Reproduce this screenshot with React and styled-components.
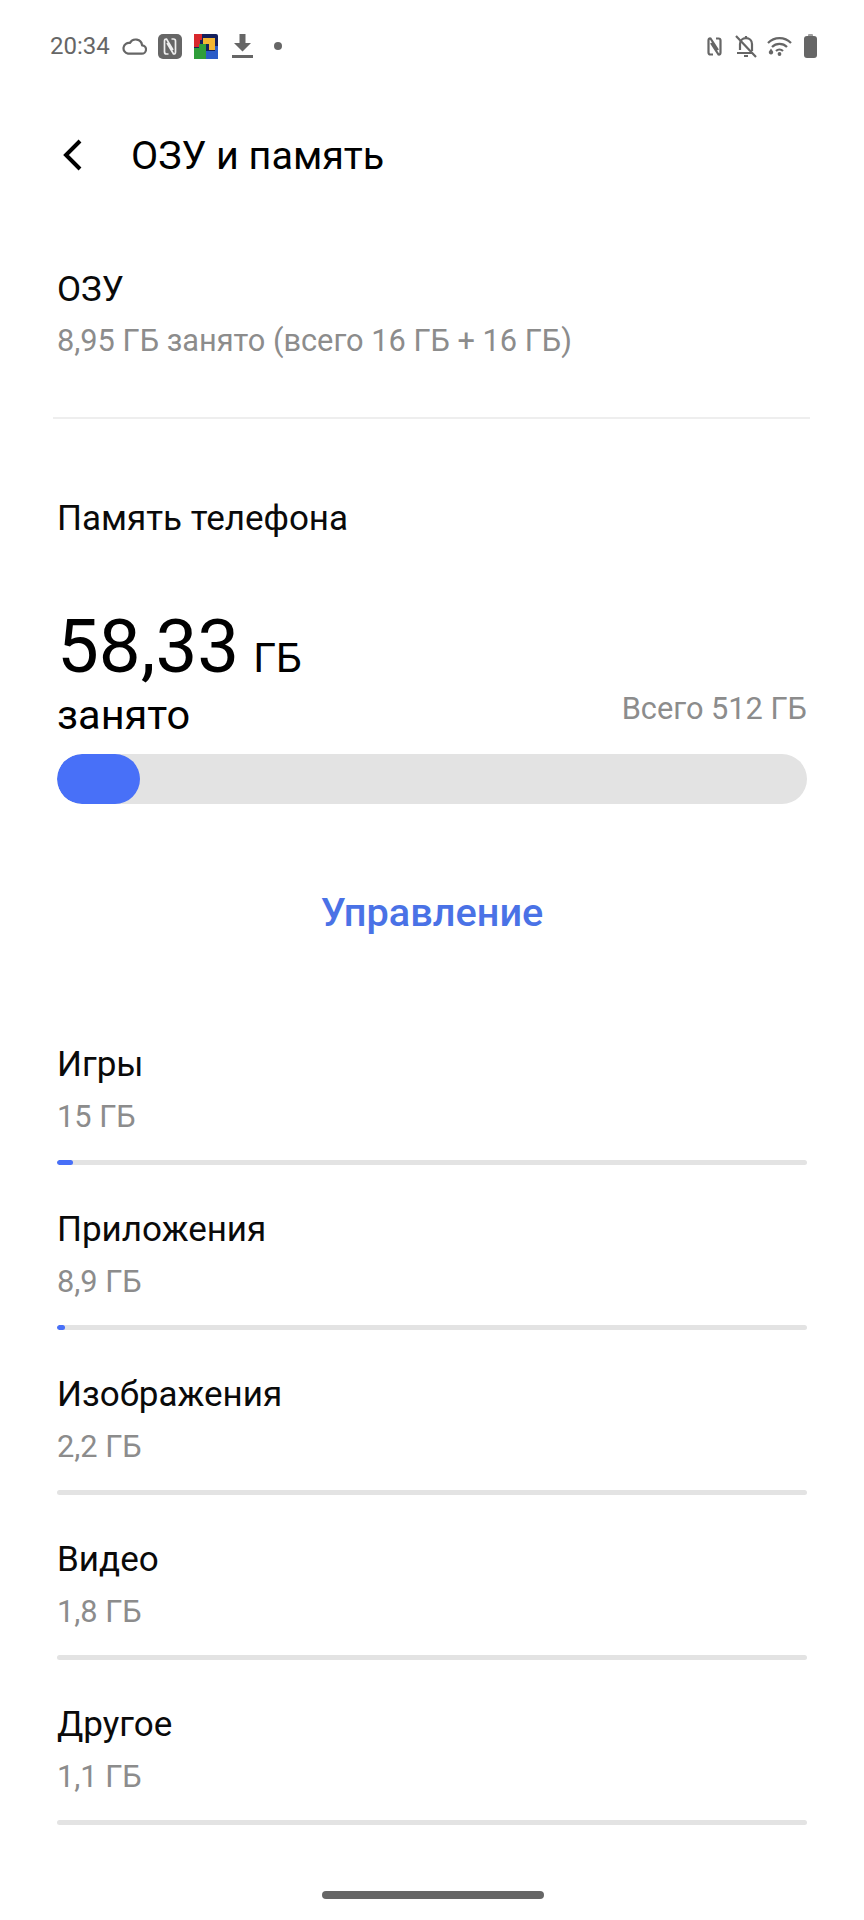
import React from "react"
import styled, { createGlobalStyle } from "styled-components"

const GlobalStyle = createGlobalStyle`
  html, body {
    margin: 0;
    padding: 0;
    background: #fff;
  }
`

const Page = styled.div`
  position: relative;
  width: 864px;
  height: 1920px;
  overflow: hidden;
  background: #fff;
  font-family: Roboto, "Noto Sans", sans-serif;
  color: #000;
  display: flex;
  flex-direction: column;
`

const StatusBar = styled.div`
  height: 92px;
  padding: 0 47px 0 50px;
  box-sizing: border-box;
  display: flex;
  align-items: center;
  justify-content: space-between;
  color: #666;
`

const StatusGroup = styled.div`
  display: flex;
  align-items: center;
`

const Time = styled.span`
  font-size: 24px;
  color: #666;
`

const Header = styled.div`
  height: 126px;
  display: flex;
  align-items: center;
  padding-left: 62px;
  box-sizing: border-box;
`

const Title = styled.h1`
  margin: 0 0 0 49px;
  font-size: 39.5px;
  font-weight: 400;
`

const Section = styled.div`
  padding: 0 57px;
`

const RamBlock = styled(Section)`
  padding-top: 52px;
  height: 199px;
  box-sizing: border-box;
`

const Label = styled.div`
  font-size: 35px;
  line-height: 40px;
  color: #0a0a0a;
`

const Sub = styled.div`
  font-size: 30.75px;
  line-height: 36px;
  color: #8c8c8c;
  margin-top: ${(p) => p.$top}px;
`

const Divider = styled.div`
  height: 2px;
  margin: 0 54px 0 53px;
  background: #eeeeee;
`

const StorageTitle = styled(Label)`
  margin-top: 80px;
`

const UsedRow = styled.div`
  margin-top: 63px;
  height: 88px;
  display: flex;
  align-items: baseline;
`

const UsedValue = styled.span`
  font-size: 74.5px;
  line-height: 90px;
`

const UsedUnit = styled.span`
  font-size: 41px;
  margin-left: 14px;
`

const UsedFoot = styled.div`
  display: flex;
  align-items: flex-start;
  justify-content: space-between;
`

const UsedLabel = styled.span`
  font-size: 41.5px;
  line-height: 50px;
`

const Total = styled.span`
  font-size: 30.75px;
  line-height: 36px;
  color: #8c8c8c;
  margin-top: 1px;
`

const Track = styled.div`
  height: ${(p) => p.$height}px;
  border-radius: ${(p) => p.$height / 2}px;
  background: #e3e3e3;
  overflow: hidden;
  margin-top: ${(p) => p.$top}px;
`

const Fill = styled.div`
  height: 100%;
  border-radius: inherit;
  background: #4870f8;
`

const Manage = styled.div`
  margin-top: 85px;
  text-align: center;
  font-size: 39.7px;
  line-height: 48px;
  font-weight: 500;
  color: #4a72e6;
`

const List = styled(Section)`
  margin-top: 108px;
  display: flex;
  flex-direction: column;
  gap: 37px;
`

const Row = styled.div`
  height: 128px;
`

const HomeBar = styled.div`
  position: absolute;
  left: 322px;
  top: 1891px;
  width: 222px;
  height: 8px;
  border-radius: 4px;
  background: #666;
`

const IconSvg = styled.svg`
  display: block;
  flex: none;
  margin-left: ${(p) => p.$left || 0}px;
`

const CloudIcon = () => (
  <IconSvg $left={12} width="25" height="18" viewBox="0 0 25 18" fill="none" stroke="#666" strokeWidth="2.2">
    <path d="M6 16.700h13.500a4.200 4.200 0 0 0 .6-8.400 6.500 6.500 0 0 0-12.200-2.300A5.400 5.400 0 0 0 6 16.700z" strokeLinejoin="round" />
  </IconSvg>
)

const NfcBadge = () => (
  <IconSvg $left={11} width="24" height="25" viewBox="0 0 24 25">
    <rect width="24" height="25" rx="5" fill="#666" />
    <path d="M10.500 20H8.500Q6.500 20 6.500 18V7Q6.500 4.800 8.500 5L15 16M13.500 5H15.500Q17.500 5 17.500 7V18Q17.500 20.200 15.500 20L9 9" fill="none" stroke="#eee" strokeWidth="1.700" />
  </IconSvg>
)

const GameIcon = () => (
  <IconSvg $left={12} width="24" height="25" viewBox="0 0 24 25">
    <rect width="24" height="25" rx="2" fill="#14205c" />
    <rect x="0" y="0" width="8" height="6" fill="#d8282c" />
    <rect x="0" y="6" width="6" height="7" fill="#d8282c" />
    <rect x="9" y="4" width="12" height="6" fill="#f2b632" />
    <rect x="15" y="9" width="6" height="7" fill="#f2b632" />
    <rect x="0" y="14" width="12" height="11" fill="#2f9e3a" />
    <rect x="5" y="10" width="7" height="5" fill="#2f9e3a" />
    <rect x="12" y="17" width="12" height="8" fill="#2a5cc8" />
    <rect x="21" y="12" width="3" height="6" fill="#2a5cc8" />
  </IconSvg>
)

const DownloadIcon = () => (
  <IconSvg $left={14} width="21" height="24" viewBox="0 0 21 24" fill="#666">
    <path d="M7.500 0h6v9h5.500l-8.500 8.500L2 9h5.500z" />
    <rect x="0" y="21" width="21" height="3" />
  </IconSvg>
)

const Dot = styled.span`
  width: 8px;
  height: 8px;
  border-radius: 50%;
  background: #666;
  margin-left: 21px;
`

const NfcIcon = () => (
  <IconSvg width="15" height="19" viewBox="0 0 15 19" fill="none" stroke="#666" strokeWidth="2.200">
    <path d="M6 17.500H3.500Q1.500 17.500 1.500 15.500V3.500Q1.500 1.200 3.500 1.500L11 13M9 1.500H11.500Q13.500 1.500 13.500 3.500V15.500Q13.500 17.800 11.500 17.500L4 6" />
  </IconSvg>
)

const BellOffIcon = () => (
  <IconSvg $left={13} width="22" height="23" viewBox="0 0 22 23" fill="none" stroke="#666" strokeWidth="2.200">
    <path d="M5 15V9c0-3.500 2.500-5.800 6-5.800S17 5.500 17 9v7M2 18h15" strokeLinejoin="round" />
    <path d="M11 3V1M9 21h4M1 1l20 21" />
  </IconSvg>
)

const WifiIcon = () => (
  <IconSvg $left={10} width="25" height="19" viewBox="0 0 25 19" fill="none" stroke="#666" strokeWidth="2.200">
    <path d="M1 6a16 16 0 0 1 23 0M5 10a10.500 10.500 0 0 1 15 0M9 14a5 5 0 0 1 7 0" />
    <circle cx="12.500" cy="17" r="1.900" fill="#666" stroke="none" />
    <path d="M2 14.500 4 11.500 6 14.500a2.200 2.200 0 1 1-4 0z" fill="#666" stroke="none" />
  </IconSvg>
)

const BatteryIcon = () => (
  <IconSvg $left={12} width="13" height="24" viewBox="0 0 13 24" fill="#666">
    <rect x="4" y="0" width="5" height="3" rx="1" fill="#a0a0a0" />
    <rect x="0" y="2" width="13" height="22" rx="3" />
  </IconSvg>
)

const BackIcon = () => (
  <IconSvg width="20" height="32" viewBox="0 0 20 32" fill="none" stroke="#000" strokeWidth="4">
    <path d="M18 2 4 16l14 14" />
  </IconSvg>
)

const categories = [
  { name: "Игры", size: "15 ГБ", pct: 2.1 },
  { name: "Приложения", size: "8,9 ГБ", pct: 1.1 },
  { name: "Изображения", size: "2,2 ГБ", pct: 0 },
  { name: "Видео", size: "1,8 ГБ", pct: 0 },
  { name: "Другое", size: "1,1 ГБ", pct: 0 },
]

export default function App() {
  return (
    <Page>
      <GlobalStyle />
      <StatusBar>
        <StatusGroup>
          <Time>20:34</Time>
          <CloudIcon />
          <NfcBadge />
          <GameIcon />
          <DownloadIcon />
          <Dot />
        </StatusGroup>
        <StatusGroup>
          <NfcIcon />
          <BellOffIcon />
          <WifiIcon />
          <BatteryIcon />
        </StatusGroup>
      </StatusBar>
      <Header>
        <BackIcon />
        <Title>ОЗУ и память</Title>
      </Header>
      <RamBlock>
        <Label>ОЗУ</Label>
        <Sub $top={13}>8,95 ГБ занято (всего 16 ГБ + 16 ГБ)</Sub>
      </RamBlock>
      <Divider />
      <Section>
        <StorageTitle>Память телефона</StorageTitle>
        <UsedRow>
          <UsedValue>58,33</UsedValue>
          <UsedUnit>ГБ</UsedUnit>
        </UsedRow>
        <UsedFoot>
          <UsedLabel>занято</UsedLabel>
          <Total>Всего 512 ГБ</Total>
        </UsedFoot>
        <Track $height={50} $top={14}>
          <Fill style={{ width: "11%" }} />
        </Track>
        <Manage>Управление</Manage>
      </Section>
      <List>
        {categories.map((c) => (
          <Row key={c.name}>
            <Label>{c.name}</Label>
            <Sub $top={14}>{c.size}</Sub>
            <Track $height={5} $top={25}>
              {c.pct > 0 && <Fill style={{ width: `${c.pct}%` }} />}
            </Track>
          </Row>
        ))}
      </List>
      <HomeBar />
    </Page>
  )
}
